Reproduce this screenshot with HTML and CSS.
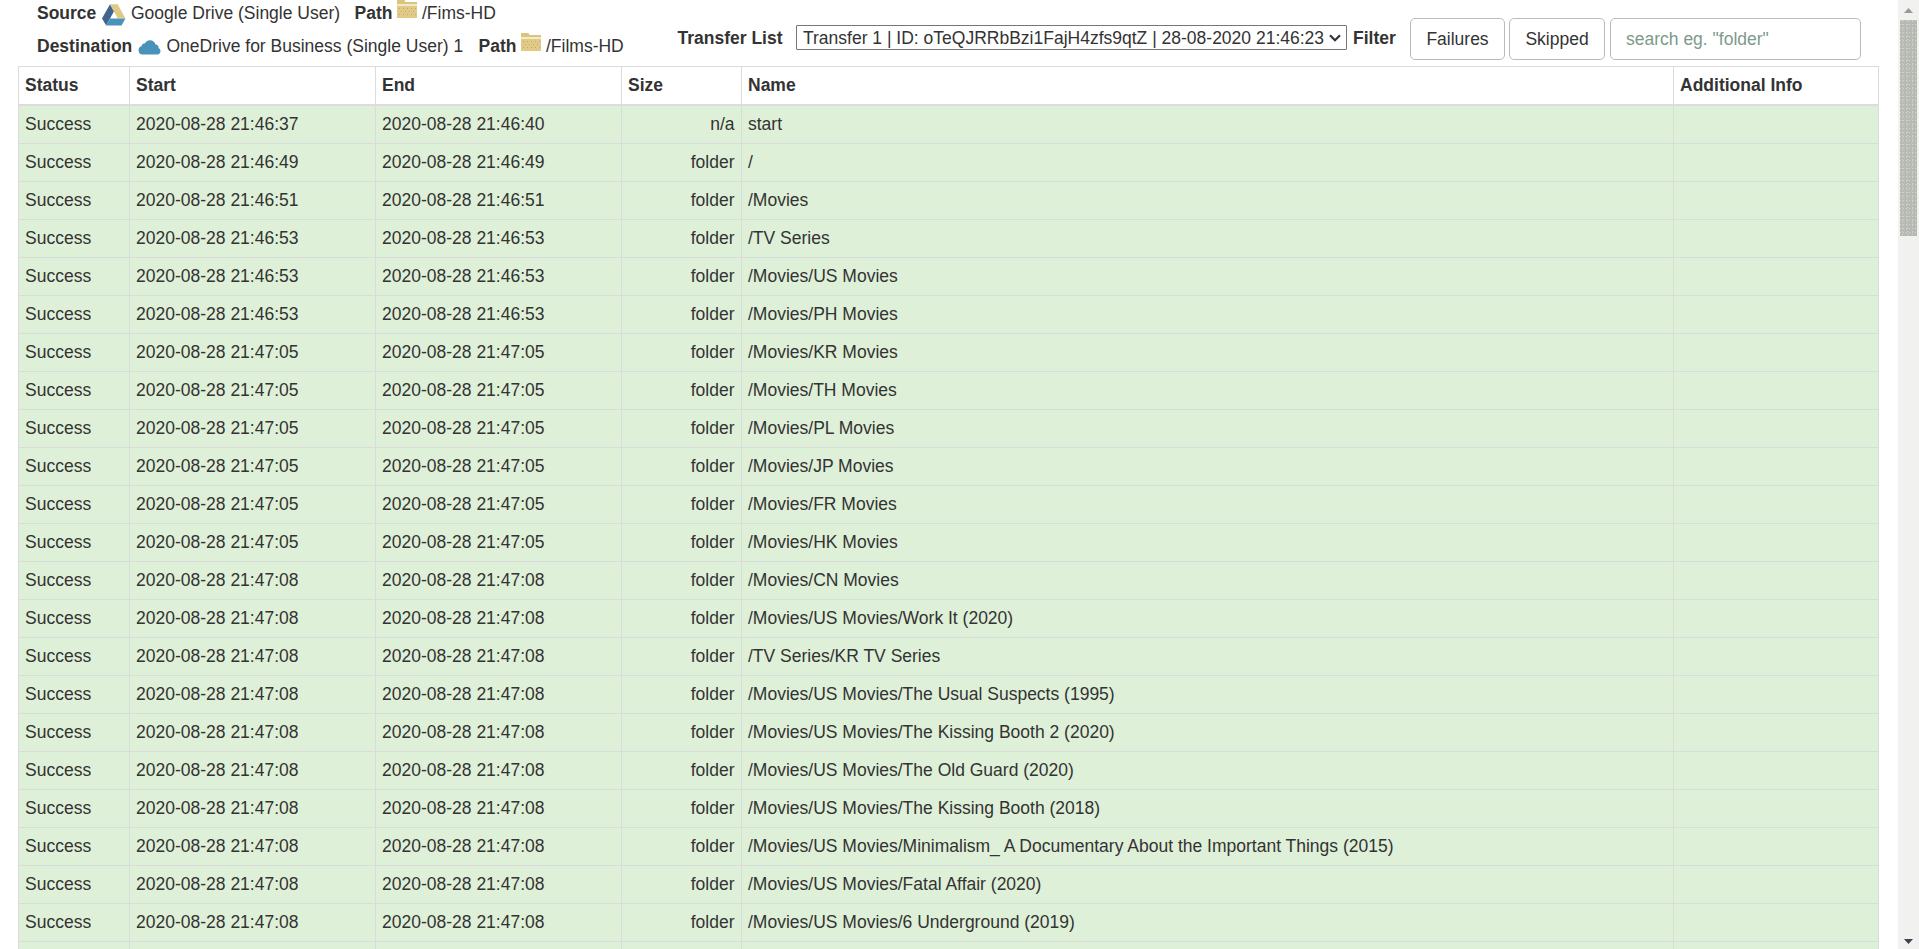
FILE: index.html
```html
<!DOCTYPE html>
<html lang="en">
<head>
<meta charset="utf-8">
<title>Transfer Log</title>
<link rel="stylesheet" href="styles.css">
</head>
<body>
<div class="page">
<main class="content">
<header class="toolbar">
  <div class="routes">
    <div class="route">
      <b class="label-source">Source</b>
      <svg class="icon drive" width="24" height="22" viewBox="0 0 24 22"><path fill="#41658f" d="M8 0.200L0 14.400L4.200 21.400L12 7.300z"/><path fill="#dfca85" d="M8 0.200h7.700L23.300 14.300h-7.600z"/><path fill="#4b92ba" d="M8 14.400H23.400L19.600 21.400H4.200z"/></svg>
      <span class="name-source">Google Drive (Single User)</span>
      <b class="label-path">Path</b>
      <svg class="icon folder" width="20" height="20" viewBox="0 0 20 20"><path fill="#d9c57f" d="M0 1h7.5l1 2H20v3H0z"/><path fill="#f0ebc4" d="M0 5h20v2.2H0z"/><path fill="#e0ca85" d="M0 7h20v12H0z"/><path stroke="#bea96a" stroke-dasharray="1 3" d="M2 9.5h17M4 12.5h15M2 15.5h17"/></svg>
      <span>/Fims-HD</span>
    </div>
    <div class="route">
      <b class="label-dest">Destination</b>
      <svg class="icon cloud" width="23" height="15" viewBox="0 0 23 15"><path fill="#4b92ba" d="M4.5 14.6A4.4 4.4 0 0 1 3.7 6Q4.1 3.3 7 3.3Q8.6.2 12 .2Q16.300.3 17.600 4.600Q20.500 5 20.700 7.900Q22.800 9 22.500 11.500Q22 14.600 18.800 14.600z"/></svg>
      <span class="name-dest">OneDrive for Business (Single User) 1</span>
      <b class="label-path">Path</b>
      <svg class="icon folder" width="20" height="20" viewBox="0 0 20 20"><path fill="#d9c57f" d="M0 1h7.5l1 2H20v3H0z"/><path fill="#f0ebc4" d="M0 5h20v2.2H0z"/><path fill="#e0ca85" d="M0 7h20v12H0z"/><path stroke="#bea96a" stroke-dasharray="1 3" d="M2 9.5h17M4 12.5h15M2 15.5h17"/></svg>
      <span>/Films-HD</span>
    </div>
  </div>
  <b class="label-list">Transfer List</b>
  <div class="picker"><span>Transfer 1 | ID: oTeQJRRbBzi1FajH4zfs9qtZ | 28-08-2020 21:46:23</span><svg width="12" height="8" viewBox="0 0 12 8"><path fill="none" stroke="#30323c" stroke-width="2.2" d="M1 1.2L6 6.200L11 1.200"/></svg></div>
  <b class="label-filter">Filter</b>
  <button class="btn failures">Failures</button>
  <button class="btn skipped">Skipped</button>
  <input class="search" type="text" placeholder='search eg. "folder"'>
</header>
<table class="log">
<colgroup><col class="c-status"><col class="c-time"><col class="c-time"><col class="c-size"><col class="c-name"><col class="c-info"></colgroup>
<thead><tr><th>Status</th><th>Start</th><th>End</th><th>Size</th><th>Name</th><th>Additional Info</th></tr></thead>
<tbody>
<tr><td>Success</td><td>2020-08-28 21:46:37</td><td>2020-08-28 21:46:40</td><td>n/a</td><td>start</td><td></td></tr>
<tr><td>Success</td><td>2020-08-28 21:46:49</td><td>2020-08-28 21:46:49</td><td>folder</td><td>/</td><td></td></tr>
<tr><td>Success</td><td>2020-08-28 21:46:51</td><td>2020-08-28 21:46:51</td><td>folder</td><td>/Movies</td><td></td></tr>
<tr><td>Success</td><td>2020-08-28 21:46:53</td><td>2020-08-28 21:46:53</td><td>folder</td><td>/TV Series</td><td></td></tr>
<tr><td>Success</td><td>2020-08-28 21:46:53</td><td>2020-08-28 21:46:53</td><td>folder</td><td>/Movies/US Movies</td><td></td></tr>
<tr><td>Success</td><td>2020-08-28 21:46:53</td><td>2020-08-28 21:46:53</td><td>folder</td><td>/Movies/PH Movies</td><td></td></tr>
<tr><td>Success</td><td>2020-08-28 21:47:05</td><td>2020-08-28 21:47:05</td><td>folder</td><td>/Movies/KR Movies</td><td></td></tr>
<tr><td>Success</td><td>2020-08-28 21:47:05</td><td>2020-08-28 21:47:05</td><td>folder</td><td>/Movies/TH Movies</td><td></td></tr>
<tr><td>Success</td><td>2020-08-28 21:47:05</td><td>2020-08-28 21:47:05</td><td>folder</td><td>/Movies/PL Movies</td><td></td></tr>
<tr><td>Success</td><td>2020-08-28 21:47:05</td><td>2020-08-28 21:47:05</td><td>folder</td><td>/Movies/JP Movies</td><td></td></tr>
<tr><td>Success</td><td>2020-08-28 21:47:05</td><td>2020-08-28 21:47:05</td><td>folder</td><td>/Movies/FR Movies</td><td></td></tr>
<tr><td>Success</td><td>2020-08-28 21:47:05</td><td>2020-08-28 21:47:05</td><td>folder</td><td>/Movies/HK Movies</td><td></td></tr>
<tr><td>Success</td><td>2020-08-28 21:47:08</td><td>2020-08-28 21:47:08</td><td>folder</td><td>/Movies/CN Movies</td><td></td></tr>
<tr><td>Success</td><td>2020-08-28 21:47:08</td><td>2020-08-28 21:47:08</td><td>folder</td><td>/Movies/US Movies/Work It (2020)</td><td></td></tr>
<tr><td>Success</td><td>2020-08-28 21:47:08</td><td>2020-08-28 21:47:08</td><td>folder</td><td>/TV Series/KR TV Series</td><td></td></tr>
<tr><td>Success</td><td>2020-08-28 21:47:08</td><td>2020-08-28 21:47:08</td><td>folder</td><td>/Movies/US Movies/The Usual Suspects (1995)</td><td></td></tr>
<tr><td>Success</td><td>2020-08-28 21:47:08</td><td>2020-08-28 21:47:08</td><td>folder</td><td>/Movies/US Movies/The Kissing Booth 2 (2020)</td><td></td></tr>
<tr><td>Success</td><td>2020-08-28 21:47:08</td><td>2020-08-28 21:47:08</td><td>folder</td><td>/Movies/US Movies/The Old Guard (2020)</td><td></td></tr>
<tr><td>Success</td><td>2020-08-28 21:47:08</td><td>2020-08-28 21:47:08</td><td>folder</td><td>/Movies/US Movies/The Kissing Booth (2018)</td><td></td></tr>
<tr><td>Success</td><td>2020-08-28 21:47:08</td><td>2020-08-28 21:47:08</td><td>folder</td><td>/Movies/US Movies/Minimalism_ A Documentary About the Important Things (2015)</td><td></td></tr>
<tr><td>Success</td><td>2020-08-28 21:47:08</td><td>2020-08-28 21:47:08</td><td>folder</td><td>/Movies/US Movies/Fatal Affair (2020)</td><td></td></tr>
<tr><td>Success</td><td>2020-08-28 21:47:08</td><td>2020-08-28 21:47:08</td><td>folder</td><td>/Movies/US Movies/6 Underground (2019)</td><td></td></tr>
<tr><td></td><td></td><td></td><td></td><td></td><td></td></tr>
</tbody>
</table>
</main>
<aside class="scrollbar">
  <svg class="arrow-up" width="9" height="5" viewBox="0 0 9 5"><path fill="#9a9a9a" d="M4.500 0L9 5H0z"/></svg>
  <div class="thumb"></div>
  <svg class="arrow-down" width="9" height="5" viewBox="0 0 9 5"><path fill="#45404c" d="M0 0h9L4.500 5z"/></svg>
</aside>
</div>
</body>
</html>
```
FILE: styles.css
```css
* { box-sizing: border-box; }
body {
  margin: 0;
  overflow: hidden;
  background: #fff;
  color: #333;
  font: 17.5px/25px "Liberation Sans", Arial, sans-serif;
}
.page { display: flex; justify-content: space-between; height: 949px; overflow: hidden; }
.content { width: 1879px; padding-left: 18px; }

.toolbar { display: flex; height: 66px; padding-left: 19px; white-space: nowrap; }
.routes { width: 640.5px; }
.route { display: flex; height: 33px; padding-top: 1px; }
.icon { flex: none; }
.label-source { width: 65px; }
.drive { margin: 3px 5px 0 0; }
.name-source { width: 223.5px; }
.label-dest { width: 101px; }
.cloud { margin: 6px 5.5px 0 0; }
.name-dest { width: 312px; }
.label-path { width: 42.5px; }
.folder { margin: -2px 5px 0 0; }

.label-list { width: 118.5px; margin-top: 26px; }
.picker {
  display: flex;
  justify-content: space-between;
  align-items: center;
  width: 551px;
  height: 25px;
  margin-top: 25px;
  padding: 1px 5px 0 6px;
  border: 1px solid #767676;
  border-radius: 1px;
}
.picker span { line-height: 24px; }
.label-filter { width: 57px; margin: 26px 0 0 6px; }
.btn, .search {
  height: 42px;
  margin: 18px 0 0;
  border: 1px solid #bbb;
  border-radius: 5px;
  background: #fff;
  color: #333;
  font: inherit;
}
.btn { padding: 0; }
.failures { width: 95px; }
.skipped { width: 96px; margin-left: 4px; }
.search { width: 251px; margin-left: 5px; padding: 0 15px; }
.search::placeholder { color: #7d9a8c; opacity: 1; }

.log {
  width: 1861px;
  table-layout: fixed;
  border-collapse: separate;
  border-spacing: 0;
  border: solid #dcdcdc;
  border-width: 1px 0 0 1px;
}
.c-status { width: 111px; }
.c-time { width: 246px; }
.c-size { width: 120px; }
.c-name { width: 932px; }
.c-info { width: 205px; }
th, td {
  height: 38px;
  padding: 0 6.5px 0 6px;
  border: solid #dcdcdc;
  border-width: 0 1px 1px 0;
  text-align: left;
  white-space: nowrap;
}
th { height: 39px; padding-bottom: 1px; border-bottom-width: 2px; }
td { background: #dff0d8; border-color: #d8dcda; }
td:nth-child(4) { text-align: right; }
td:last-child { border-right-color: #dcdcdc; }

.scrollbar {
  display: flex;
  flex-direction: column;
  align-items: center;
  width: 21px;
  background: #f1f1f0;
}
.arrow-up { margin: 8px 0 7px; }
.thumb {
  width: 17px;
  height: 216px;
  background-color: #b6bab2;
  background-image:
    radial-gradient(circle at 0.5px 0.5px, #d3d6ce 0.7px, transparent 0.8px),
    radial-gradient(circle at 2.5px 1.5px, #cfd2ca 0.7px, transparent 0.8px);
  background-size: 3px 4px, 5px 3px;
}
.arrow-down { margin: auto 0 5px; }
```
